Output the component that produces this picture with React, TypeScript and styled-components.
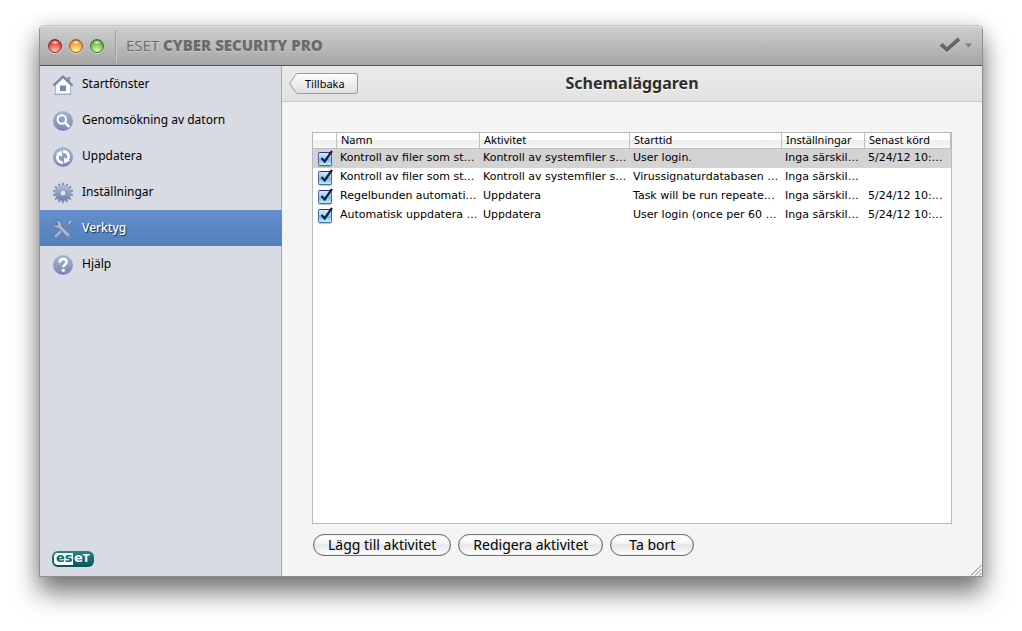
import React, { useState } from 'react';
import styled, { createGlobalStyle, css } from 'styled-components';

const uiFont = '"Noto Sans", "Open Sans", sans-serif';
const tableFont = '"DejaVu Sans", "Noto Sans", sans-serif';

const GlobalStyle = createGlobalStyle`
  * { box-sizing: border-box; }
  body { margin: 0; background: #fff; color: #000; font-family: ${uiFont}; }
  button { font-family: inherit; color: inherit; }
`;

const Desktop = styled.div`
  display: flex;
  min-height: 100vh;
  padding: 25px 39px 54px;
  overflow: hidden;
`;

const Window = styled.div`
  position: relative;
  flex: 1;
  min-width: 0;
  display: flex;
  flex-direction: column;
  border: 1px solid #8f8f8f;
  border-top-color: #c4c4c4;
  border-radius: 5px 5px 0 0;
  background: #f4f4f4;
  box-shadow: 0 16px 26px rgba(0, 0, 0, 0.5), 0 2px 20px rgba(0, 0, 0, 0.15);
`;

const TitleBar = styled.header`
  display: flex;
  align-items: center;
  height: 40px;
  padding: 0 10px 0 8px;
  border-top: 1px solid #dedede;
  border-bottom: 1px solid #545454;
  border-radius: 4px 4px 0 0;
  background: linear-gradient(#cfcfcf, #a5a5a5);
`;

const Lights = styled.div`
  display: flex;
  gap: 7px;
`;

const Light = styled.button<{ $dark: string; $mid: string; $glow: string }>`
  width: 14px;
  height: 14px;
  padding: 0;
  border: 1px solid ${p => p.$dark};
  border-radius: 50%;
  background:
    radial-gradient(ellipse 4px 2px at 50% 20%, rgba(255, 255, 255, 0.9), rgba(255, 255, 255, 0)),
    radial-gradient(circle at 50% 90%, ${p => p.$glow} 10%, ${p => p.$mid} 65%, ${p => p.$dark} 100%);
  box-shadow: 0 1px 0 rgba(255, 255, 255, 0.5);
`;

const Divider = styled.div`
  width: 2px;
  height: 32px;
  margin: 0 9px 0 11px;
  background: linear-gradient(90deg, #a2a2a2 50%, #c9c9c9 50%);
`;

const Brand = styled.h1`
  flex: 1;
  margin: 0;
  padding-bottom: 2px;
  font: 400 15px/20px "Open Sans", sans-serif;
  color: #6b6b6b;
  text-shadow: 0 1px 0 rgba(255, 255, 255, 0.3);
  strong { font-weight: 800; }
`;

const StatusButton = styled.button`
  display: flex;
  padding: 0 0 2px;
  border: 0;
  background: none;
`;

const Body = styled.div`
  flex: 1;
  display: flex;
`;

const Sidebar = styled.nav`
  display: flex;
  flex-direction: column;
  flex: 0 0 242px;
  border-right: 1px solid #a6a8ae;
  background: #d8dbe3;
`;

const Menu = styled.ul`
  flex: 1;
  margin: 0;
  padding: 0;
  list-style: none;
`;

const MenuLink = styled.a<{ $active?: boolean }>`
  display: flex;
  align-items: center;
  gap: 8px;
  height: 36px;
  padding-left: 12px;
  font-size: 12px;
  line-height: 16px;
  color: #000;
  text-decoration: none;
  svg { flex: none; margin-top: 2px; }
  ${p => p.$active && css`
    margin-right: -1px;
    color: #fff;
    font-weight: 500;
    text-shadow: 1px 1px 1px #1c2c48;
    background: linear-gradient(#6391cd, #537fbc);
  `}
`;

const Logo = styled.div`
  display: flex;
  align-self: flex-start;
  height: 16px;
  margin: 0 0 9px 12px;
  padding: 2px;
  border-radius: 6px;
  background: linear-gradient(#27868a, #03555b);
  font: bold 13px/10px "DejaVu Sans", sans-serif;
`;

const LogoHalf = styled.span<{ $light?: boolean }>`
  width: 19px;
  padding-left: ${p => (p.$light ? '2px' : '1px')};
  border-radius: ${p => (p.$light ? '4px 0 0 4px' : '0')};
  color: ${p => (p.$light ? '#0b686d' : '#fff')};
  background: ${p => (p.$light ? '#fff' : 'transparent')};
  small { font-size: 10px; }
`;

const Main = styled.main`
  flex: 1;
  min-width: 0;
  display: flex;
  flex-direction: column;
`;

const Toolbar = styled.div`
  display: grid;
  grid-template-columns: 1fr auto 1fr;
  align-items: center;
  height: 36px;
  padding: 0 7px;
  border-bottom: 1px solid #c8c8c8;
  background: linear-gradient(#ebebeb, #e2e2e2);
`;

const Title = styled.h2`
  margin: 0;
  padding-bottom: 2px;
  font-size: 16px;
  line-height: 20px;
  color: #2e2e2e;
  text-shadow: 0 1px 0 #fff;
`;

const BackButton = styled.button`
  display: flex;
  justify-self: start;
  height: 21px;
  padding: 0;
  border: 0;
  background: none;
  font-size: 11px;
  line-height: 19px;
  svg { display: block; }
`;

const BackLabel = styled.span`
  height: 21px;
  padding: 0 12px 0 4px;
  border: 1px solid #9b9b9b;
  border-left: 0;
  border-radius: 0 3px 3px 0;
  background: linear-gradient(#fdfdfd, #e0e0e0);
`;

const Content = styled.section`
  flex: 1;
  display: flex;
  flex-direction: column;
  gap: 10px;
  padding: 30px 30px 20px;
`;

const ListBox = styled.div`
  flex: 1;
  border: 1px solid #b9b9b9;
  background: #fff;
`;

const Table = styled.table`
  width: 100%;
  table-layout: fixed;
  border-collapse: separate;
  border-spacing: 0;
  font: 11px/18px ${tableFont};
  white-space: nowrap;
`;

const Col = styled.col<{ $w?: number }>`
  width: ${p => (p.$w ? `${p.$w}px` : 'auto')};
`;

const HeadCell = styled.th`
  height: 16px;
  padding: 0 0 2px 4px;
  border-right: 1px solid #c0c0c0;
  border-bottom: 1px solid #c0c0c0;
  background: linear-gradient(#fff 0%, #fff 45%, #ededed 50%, #f8f8f8 100%);
  font: 11px/13px ${uiFont};
  text-align: left;
`;

const Row = styled.tr<{ $selected: boolean }>`
  background: ${p => (p.$selected ? '#d3d3d3' : '#fff')};
`;

const Cell = styled.td`
  height: 19px;
  padding: 0 0 1px 3px;
`;

const CheckLabel = styled.label`
  position: relative;
  display: block;
  width: 14px;
  height: 14px;
  margin: 2px 0 0 2px;
  svg { position: absolute; left: 0; top: -3px; pointer-events: none; }
  input:not(:checked) + svg { display: none; }
`;

const Check = styled.input`
  appearance: none;
  display: block;
  width: 14px;
  height: 14px;
  margin: 0;
  border: 1px solid #4d6ca6;
  border-top-color: #30348c;
  border-radius: 2px;
  background: linear-gradient(#d6eafa 0%, #9fcbf2 45%, #73b4ec 50%, #b8f0ff 100%);
  box-shadow: 0 1px 1px rgba(0, 0, 0, 0.25);
`;

const Footer = styled.div`
  display: flex;
  gap: 7px;
  padding-left: 1px;
`;

const PillButton = styled.button`
  min-width: 84px;
  height: 22px;
  padding: 0 14px;
  border: 1px solid #6e6e6e;
  border-radius: 11px;
  background: linear-gradient(#fff 0%, #f6f6f6 40%, #e6e6e6 50%, #fff 100%);
  box-shadow: inset 0 0 1px #8a8a8a;
  font-size: 14px;
  line-height: 18px;
`;

const Grip = styled.div`
  position: absolute;
  right: 0;
  bottom: 0;
  svg { display: block; }
`;

const IconSvg = ({ id, children }: { id: string; children: React.ReactNode }) => (
  <svg width="22" height="22" viewBox="0 0 22 22" aria-hidden="true">
    <linearGradient id={id} x1="0" y1="0" x2="0" y2="1">
      <stop offset="0" stopColor="#a9b7d1" />
      <stop offset="1" stopColor="#7487ae" />
    </linearGradient>
    {children}
  </svg>
);

const HomeIcon = () => (
  <IconSvg id="g-home">
    <path d="M1.5 20.5h19" stroke="#8596b8" strokeWidth="1" opacity=".6" />
    <path d="M15 3h4v1.500h-1v4.500l-3-3z" fill="#8a9abb" />
    <path d="M3.500 11 11 4l7.500 7v9h-15z" fill="#fbfbfd" stroke="#9aa8c4" strokeWidth=".8" />
    <path d="M1.400 11.600 11 2.400l9.600 9.200" fill="none" stroke="#7488b0" strokeWidth="2.200" />
    <path d="M8 11.500h6v5.500H8z" fill="#7689b0" />
  </IconSvg>
);

const ScanIcon = () => (
  <IconSvg id="g-scan">
    <circle cx="11" cy="11" r="10" fill="url(#g-scan)" />
    <circle cx="9.800" cy="9.500" r="4.200" fill="#8fa0c2" stroke="#fff" strokeWidth="2" />
    <path d="m13 12.800 3.600 3.400" stroke="#fff" strokeWidth="2.600" strokeLinecap="round" />
  </IconSvg>
);

const UpdateIcon = () => (
  <IconSvg id="g-upd">
    <circle cx="11" cy="11" r="10" fill="url(#g-upd)" />
    <path d="M11 16.600C6.500 16.600 3.900 12.500 6.300 8.300" fill="none" stroke="#fff" strokeWidth="2.600" />
    <path d="M4 7.600 9.800 4.600 10 10.600z" fill="#fff" />
    <path d="M11 5.400c4.500 0 7.100 4.100 4.700 8.300" fill="none" stroke="#fff" strokeWidth="2.600" />
    <path d="m18 14.400-5.800 3-.2-6z" fill="#fff" />
  </IconSvg>
);

const GearIcon = () => (
  <IconSvg id="g-gear">
    {Array.from({ length: 14 }, (_, i) => (
      <path
        key={i}
        d="M9.700 5 10 .8h2l.3 4.200z"
        fill="#8494b6"
        transform={`rotate(${(i * 360) / 14} 11 11)`}
      />
    ))}
    <circle cx="11" cy="11" r="5.500" fill="none" stroke="url(#g-gear)" strokeWidth="5" />
    <circle cx="11" cy="11" r="3" fill="#dfe3ec" stroke="#6d7fa5" strokeWidth=".7" />
  </IconSvg>
);

const ToolsIcon = () => (
  <IconSvg id="g-tool">
    <g stroke="#566a92" strokeWidth=".9" strokeLinejoin="round">
      <path d="M19.800 2.200 18.300 1.300 15.500 4.600 15.300 6 9.800 11.400 8 11.200 2.200 17.200C1 18.800 3.200 21 4.800 19.800L10.700 14 10.600 12.300 16.200 6.900 17.600 6.600 20.500 3.500z" fill="#a3b0ca" />
      <path d="M3.200 2.500 6 5.300 5.300 7 3.700 7.500 1.200 5C.7 8.200 3.300 10.800 6.500 10.200L15.800 19.700C17.800 21.500 20.500 19 18.800 17L9.600 7.700C10.300 4.200 7 1.300 3.200 2.500z" fill="#aab6ce" />
    </g>
    <circle cx="17.200" cy="18.200" r="1" fill="#566a92" />
  </IconSvg>
);

const HelpIcon = () => (
  <IconSvg id="g-help">
    <circle cx="11" cy="11" r="10" fill="url(#g-help)" />
    <path d="M7.600 8.600c.1-2.300 1.500-3.500 3.500-3.500 2.100 0 3.500 1.200 3.500 3 0 2.600-3.300 2.700-3.300 5.200" fill="none" stroke="#fff" strokeWidth="2.500" />
    <circle cx="11.300" cy="16.300" r="1.600" fill="#fff" />
  </IconSvg>
);

const menu = [
  { label: 'Startfönster', Icon: HomeIcon },
  { label: 'Genomsökning av datorn', Icon: ScanIcon },
  { label: 'Uppdatera', Icon: UpdateIcon },
  { label: 'Inställningar', Icon: GearIcon },
  { label: 'Verktyg', Icon: ToolsIcon, active: true },
  { label: 'Hjälp', Icon: HelpIcon },
];

const columnWidths = [24, 143, 150, 152, 83, 0];
const headings = ['', 'Namn', 'Aktivitet', 'Starttid', 'Inställningar', 'Senast körd'];

const tasks = [
  ['Kontroll av filer som st…', 'Kontroll av systemfiler s…', 'User login.', 'Inga särskil…', '5/24/12 10:…'],
  ['Kontroll av filer som st…', 'Kontroll av systemfiler s…', 'Virussignaturdatabasen …', 'Inga särskil…', ''],
  ['Regelbunden automati…', 'Uppdatera', 'Task will be run repeate…', 'Inga särskil…', '5/24/12 10:…'],
  ['Automatisk uppdatera …', 'Uppdatera', 'User login (once per 60 …', 'Inga särskil…', '5/24/12 10:…'],
];

export default function App() {
  const [selected, setSelected] = useState(0);
  return (
    <Desktop>
      <GlobalStyle />
      <Window>
        <TitleBar>
          <Lights>
            <Light aria-label="Stäng" $dark="#8c2a2a" $mid="#e3413f" $glow="#ffb3ab" />
            <Light aria-label="Minimera" $dark="#9c5a22" $mid="#ee9a3c" $glow="#fff08a" />
            <Light aria-label="Zooma" $dark="#3f6f2a" $mid="#6fb24a" $glow="#d5f59a" />
          </Lights>
          <Divider />
          <Brand>ESET <strong>CYBER SECURITY PRO</strong></Brand>
          <StatusButton aria-label="Status">
            <svg width="34" height="18" viewBox="0 0 34 18">
              <path d="m3 8.500 6 5.200L21 3" transform="translate(0 1)" fill="none" stroke="#fff" strokeOpacity=".3" strokeWidth="4" />
              <path d="m3 8.500 6 5.200L21 3" fill="none" stroke="#666" strokeWidth="4" />
              <path d="M27 7.500h7l-3.500 4z" fill="#7f7f7f" />
            </svg>
          </StatusButton>
        </TitleBar>
        <Body>
          <Sidebar>
            <Menu>
              {menu.map(({ label, Icon, active }) => (
                <li key={label}>
                  <MenuLink href="#" $active={active}>
                    <Icon />
                    {label}
                  </MenuLink>
                </li>
              ))}
            </Menu>
            <Logo>
              <LogoHalf $light>es</LogoHalf>
              <LogoHalf>e<small>T</small></LogoHalf>
            </Logo>
          </Sidebar>
          <Main>
            <Toolbar>
              <BackButton>
                <svg width="12" height="21" viewBox="0 0 12 21" aria-hidden="true">
                  <linearGradient id="g-back" x1="0" y1="0" x2="0" y2="1">
                    <stop offset="0" stopColor="#fdfdfd" />
                    <stop offset="1" stopColor="#e0e0e0" />
                  </linearGradient>
                  <path d="M12 .5H9Q7.500.5 6.500 2L.7 10.500 6.500 19q1 1.500 2.500 1.500h3" fill="url(#g-back)" stroke="#9b9b9b" />
                </svg>
                <BackLabel>Tillbaka</BackLabel>
              </BackButton>
              <Title>Schemaläggaren</Title>
            </Toolbar>
            <Content>
              <ListBox>
                <Table>
                  <colgroup>
                    {columnWidths.map((w, i) => <Col key={i} $w={w} />)}
                  </colgroup>
                  <thead>
                    <tr>
                      {headings.map(h => <HeadCell key={h} scope="col">{h}</HeadCell>)}
                    </tr>
                  </thead>
                  <tbody>
                    {tasks.map((cells, r) => (
                      <Row key={r} $selected={r === selected} onClick={() => setSelected(r)}>
                        <Cell>
                          <CheckLabel>
                            <Check type="checkbox" defaultChecked aria-label={cells[0]} />
                            <svg width="16" height="17" viewBox="0 0 16 17" aria-hidden="true">
                              <path d="M3.500 9 6.700 12.500 14 2" fill="none" stroke="#142033" strokeWidth="2.200" />
                            </svg>
                          </CheckLabel>
                        </Cell>
                        {cells.map((text, c) => <Cell key={c}>{text}</Cell>)}
                      </Row>
                    ))}
                  </tbody>
                </Table>
              </ListBox>
              <Footer>
                <PillButton>Lägg till aktivitet</PillButton>
                <PillButton>Redigera aktivitet</PillButton>
                <PillButton>Ta bort</PillButton>
              </Footer>
            </Content>
          </Main>
        </Body>
        <Grip>
          <svg width="12" height="12" viewBox="0 0 12 12" aria-hidden="true">
            <path d="M1 11.500 11.500 1M5 11.500 11.500 5M9 11.500l2.500-2.500" stroke="#808080" strokeWidth="1" />
          </svg>
        </Grip>
      </Window>
    </Desktop>
  );
}
